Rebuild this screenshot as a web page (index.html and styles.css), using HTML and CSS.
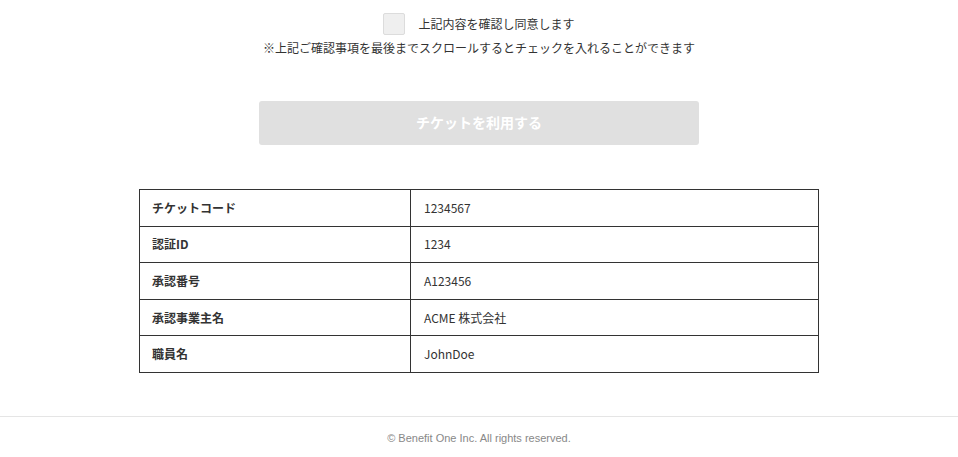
FILE: index.html
```html
<!DOCTYPE html>
<html lang="ja">
<head>
<meta charset="utf-8">
<title>チケット</title>
<link rel="stylesheet" href="styles.css">
</head>
<body>
<main class="main">
  <label class="agree">
    <span class="checkbox"></span>
    <span class="agree-text">上記内容を確認し同意します</span>
  </label>
  <p class="note">※上記ご確認事項を最後までスクロールするとチェックを入れることができます</p>
  <button class="use-btn" type="button" disabled>チケットを利用する</button>
  <table class="info">
    <tr><th>チケットコード</th><td>1234567</td></tr>
    <tr><th>認証ID</th><td>1234</td></tr>
    <tr><th>承認番号</th><td>A123456</td></tr>
    <tr><th>承認事業主名</th><td>ACME 株式会社</td></tr>
    <tr><th>職員名</th><td>JohnDoe</td></tr>
  </table>
</main>
<footer class="footer">© Benefit One Inc. All rights reserved.</footer>
</body>
</html>
```
FILE: styles.css
```css
html, body {
  margin: 0;
  padding: 0;
  background: #fff;
}
body {
  font-family: "Noto Sans CJK JP", "Noto Sans", sans-serif;
  color: #333;
  font-size: 12px;
}
.main {
  display: flex;
  flex-direction: column;
  align-items: center;
  padding-top: 13px;
}
.agree {
  display: flex;
  align-items: center;
  gap: 13px;
  height: 22px;
}
.checkbox {
  width: 20px;
  height: 20px;
  border: 1px solid #dcdcdc;
  background: #efefef;
  border-radius: 2px;
}
.agree-text {
  font-size: 12px;
  line-height: 18px;
  margin-top: -1px;
}
.note {
  margin: 4px 0 0;
  font-size: 12px;
  line-height: 18px;
}
.use-btn {
  margin-top: 44px;
  width: 440px;
  height: 44px;
  border: none;
  border-radius: 3px;
  background: #e0e0e0;
  color: #fff;
  font-family: "Noto Sans CJK JP", "Noto Sans", sans-serif;
  font-weight: bold;
  font-size: 14px;
  line-height: 20px;
  padding: 0 0 2px;
}
.info {
  margin-top: 44px;
  width: 680px;
  border-collapse: collapse;
}
.info th, .info td {
  border: 1px solid #333;
  padding: 8.8px 12px;
  line-height: 18px;
  font-size: 12px;
  text-align: left;
}
.info th {
  width: 246px;
  font-weight: bold;
}
.info td {
  padding-left: 13px;
}
.footer {
  margin-top: 43px;
  border-top: 1px solid #e5e5e5;
  padding-top: 13px;
  text-align: center;
  font-family: "Liberation Sans", Arial, sans-serif;
  font-size: 11px;
  line-height: 16px;
  color: #888;
}
```
